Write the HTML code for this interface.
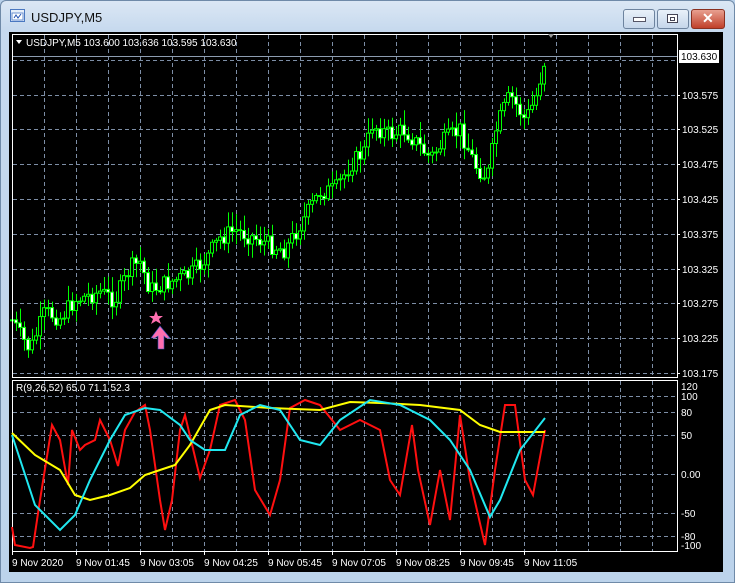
<!DOCTYPE html>
<html><head><meta charset="utf-8"><style>
html,body{margin:0;padding:0;width:735px;height:583px;overflow:hidden;background:#b9d1ea;font-family:"Liberation Sans",sans-serif}
.win{position:absolute;left:0;top:0;width:733px;height:581px;border:1px solid #6f8aa8;background:linear-gradient(#dbe7f4,#c6d9ee 30px,#bcd3eb);border-radius:6px 6px 0 0}
.title{position:absolute;left:31px;top:10px;font-size:13px;color:#111}
.btn{position:absolute;top:9px;height:18px;border:1px solid #6d839e;border-radius:3px;background:linear-gradient(#e9f1f9,#c5d6ea)}
.chart{position:absolute;left:9px;top:32px;width:714px;height:540px;background:#000}
svg text{font-family:"Liberation Sans",sans-serif;font-size:10px;fill:#fff}
</style></head><body>
<div class="win"></div>
<svg style="position:absolute;left:10px;top:9px" width="16" height="14"><rect x="0.5" y="0.5" width="14" height="12" fill="#e8f0fa" stroke="#4a78c0"/><rect x="2" y="4" width="11" height="7" fill="#fff" stroke="#6a90d0"/><path d="M4 9 L6 6 L8 9 L11 5" stroke="#2050b0" fill="none"/></svg>
<div class="title">USDJPY,M5</div>
<div class="btn" style="left:623px;width:30px"><div style="position:absolute;left:9px;top:7px;width:11px;height:3px;background:#fff;border:1px solid #556"></div></div>
<div class="btn" style="left:657px;width:30px"><div style="position:absolute;left:9px;top:4px;width:9px;height:7px;border:1px solid #445;background:#fff"><div style="margin:2px;height:2px;border:1px solid #445"></div></div></div>
<div class="btn" style="left:691px;width:32px;background:linear-gradient(#e8a090,#c0402a);border-color:#8a3020"><div style="position:absolute;left:10px;top:0px;color:#fff;font-weight:bold;font-size:14px">✕</div></div>
<div class="chart"></div>
<svg id="s" style="position:absolute;left:0;top:0" width="735" height="583"></svg>
<script>
var s=document.getElementById('s'),h='';
function L(x1,y1,x2,y2,c,d,w){h+='<line x1="'+x1+'" y1="'+y1+'" x2="'+x2+'" y2="'+y2+'" stroke="'+c+'" stroke-width="'+(w||1)+'"'+(d?' stroke-dasharray="4,3"':'')+'/>';}
var g='#7d8ea6';
for(var x=44;x<678;x+=32){L(x+.5,35,x+.5,377,g,1);L(x+.5,381,x+.5,551,g,1);}
[60,95,129,164,199,234,269,303,338,373].forEach(function(y){L(13,y+.5,677,y+.5,g,1);});
[396,412,435,474,513,536].forEach(function(y){L(13,y+.5,677,y+.5,g,1);});
L(13,56.5,677,56.5,'#8c9cb0',0);
// candles
var kp=[[12,320],[20,335],[30,350],[45,312],[60,318],[75,300],[100,292],[115,300],[130,268],[140,262],[150,290],[170,282],[190,275],[205,260],[220,238],[235,230],[255,238],[270,245],[285,250],[300,225],[320,192],[335,190],[350,165],[365,150],[372,125],[390,135],[405,130],[430,158],[445,140],[460,130],[475,165],[487,178],[497,125],[510,95],[525,120],[535,100],[545,58]];
function P(x){for(var i=0;i<kp.length-1;i++){if(x<=kp[i+1][0]){var t=(x-kp[i][0])/(kp[i+1][0]-kp[i][0]);return kp[i][1]+t*(kp[i+1][1]-kp[i][1]);}}return 58;}
var seed=7;function r(){seed=(seed*9301+49297)%233280;return seed/233280;}
var prev=P(12);
for(var x=12;x<=545;x+=4){var c=P(x)+(r()-.5)*18;var o=prev;var hi=Math.min(o,c)-2-r()*14,lo=Math.max(o,c)+2+r()*12;
L(x+.5,hi,x+.5,lo,'#00ff00',0);var t=Math.min(o,c),b=Math.max(o,c);if(b-t<1)b=t+1;
h+='<rect x="'+(x-1.5)+'" y="'+t+'" width="3" height="'+(b-t)+'" fill="'+(c<o?'#000':'#fff')+'" stroke="#00ff00"/>';prev=c;}
h+='<rect x="12.5" y="34.5" width="665" height="343" fill="none" stroke="#fff"/>';
h+='<rect x="12.5" y="380.5" width="665" height="171" fill="none" stroke="#fff"/>';
// star and arrow
h+='<polygon points="156,311 158,316 163,316 159,319 161,324 156,321 151,324 153,319 149,316 154,316" fill="#ff6fb0"/>';
h+='<polygon points="160,326 170,338 166,338 164,336 164,349 158,349 158,336 155,338 151,338" fill="#ff6fb0" stroke="#3050c0" stroke-width=".6"/>';
function PL(pts,c){h+='<polyline points="'+pts.map(function(p){return p.join(',')}).join(' ')+'" fill="none" stroke="'+c+'" stroke-width="2"/>';}
PL([[12,527],[15,545],[30,548],[33,547],[40,500],[52,425],[60,440],[68,485],[72,430],[80,450],[85,445],[95,440],[100,420],[110,440],[118,466],[125,430],[135,412],[145,405],[150,430],[160,500],[165,530],[172,500],[180,430],[185,415],[200,478],[210,450],[220,405],[235,400],[245,420],[255,490],[270,515],[280,480],[290,408],[305,400],[320,405],[340,430],[360,420],[380,430],[390,480],[400,495],[412,425],[418,470],[430,525],[440,470],[450,520],[460,415],[470,480],[485,545],[495,470],[505,405],[515,405],[525,480],[533,495],[545,430]],'#ff1010');
PL([[12,433],[35,455],[60,470],[75,495],[90,500],[110,495],[130,488],[145,475],[160,470],[175,465],[190,445],[210,410],[225,405],[270,408],[320,410],[350,402],[380,403],[420,405],[460,410],[480,425],[500,432],[520,432],[545,432]],'#ffff00');
PL([[12,435],[35,505],[60,530],[75,515],[90,480],[110,440],[125,415],[145,408],[160,410],[180,425],[190,440],[205,450],[225,450],[240,415],[260,405],[280,410],[300,440],[320,445],[340,420],[370,400],[400,405],[430,420],[450,440],[470,470],[490,517],[500,500],[520,450],[545,418]],'#20e8f0');
h+='<polygon points="548,34 554,34 551,38" fill="#999"/>';
h+='<polygon points="16,40 22,40 19,44" fill="#fff"/><text x="26" y="46">USDJPY,M5  103.600 103.636 103.595 103.630</text>';
h+='<text x="16" y="391">R(9,26,52) 65.0 71.1 52.3</text>';
[['103.575',99],['103.525',133],['103.475',168],['103.425',203],['103.375',238],['103.325',273],['103.275',307],['103.225',342],['103.175',377]].forEach(function(a){h+='<text x="682" y="'+a[1]+'">'+a[0]+'</text>';L(677,a[1]-3.5,680,a[1]-3.5,'#fff');});
h+='<rect x="679" y="50" width="40" height="13" fill="#fff"/><text x="681" y="60" style="fill:#000">103.630</text>';
[['120',390],['100',400],['80',416],['50',439],['0.00',478],['-50',517],['-80',540],['-100',549]].forEach(function(a){h+='<text x="681" y="'+a[1]+'">'+a[0]+'</text>';});
['9 Nov 2020','9 Nov 01:45','9 Nov 03:05','9 Nov 04:25','9 Nov 05:45','9 Nov 07:05','9 Nov 08:25','9 Nov 09:45','9 Nov 11:05'].forEach(function(t,i){var x=12+i*64;h+='<text x="'+x+'" y="566">'+t+'</text>';L(x+.5,551,x+.5,555,'#fff');});
s.innerHTML=h;
</script>
</body></html>
